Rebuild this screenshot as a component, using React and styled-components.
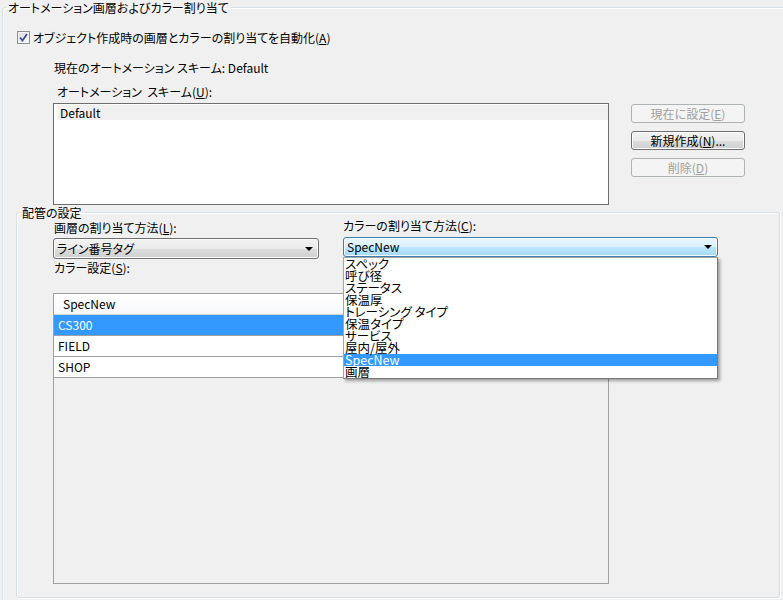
import React from 'react';
import styled, { createGlobalStyle, css } from 'styled-components';

const GlobalStyle = createGlobalStyle`
    html, body {
        margin: 0;
        padding: 0;
        background: #f0f0f0;
        overflow: hidden;
    }
    body {
        font-family: "Noto Sans CJK JP", "Noto Sans", sans-serif;
        font-size: 12px;
        color: #000;
        font-feature-settings: "palt";
    }
`;

const Page = styled.div`
    width: 783px;
    height: 600px;
    overflow: hidden;
`;

// Windows 7 style group box
const GroupBox = styled.fieldset`
    margin: 0;
    padding: 0;
    border: 1px solid #d5dfe5;
    border-radius: 3px;
    box-shadow: inset 1px 1px 0 #fff, 1px 1px 0 #fff;
    min-width: 0;
`;

const OuterGroup = styled(GroupBox)`
    margin-left: 2px;
    width: 800px;
    height: 640px;
`;

const InnerGroup = styled(GroupBox)`
    margin-left: 13px;
    width: 762px;
    height: 391px;
`;

const Legend = styled.legend`
    margin-left: 3px;
    padding: 1px 2px 0;
    line-height: 13px;
    height: 14px;
    box-sizing: border-box;
`;

const Label = styled.div`
    line-height: 14px;
    white-space: nowrap;
    margin-top: ${p => p.$top || 0}px;
    margin-left: ${p => p.$left || 0}px;
`;

const CheckRow = styled.label`
    display: flex;
    align-items: center;
    gap: 3px;
    margin: 17px 0 0 14px;
    line-height: 13px;
    height: 13px;
`;

const Box = styled.span`
    width: 11px;
    height: 11px;
    border: 1px solid #8e8f8f;
    background: linear-gradient(135deg, #dcdcdc, #fbfbfb);
    display: flex;
    align-items: center;
    justify-content: center;
    box-shadow: inset 0 0 0 1px #f4f4f4;
`;

const SchemeRow = styled.div`
    display: flex;
    gap: 22px;
    margin: 4px 0 0 50px;
`;

const ListBox = styled.div`
    width: 554px;
    height: 99px;
    border: 1px solid #6e6e6e;
    background: #fff;
    padding: 1px 0 0 0;
    box-sizing: content-box;
`;

const ListItem = styled.div`
    margin-left: 4px;
    height: 15px;
    line-height: 15px;
    padding-left: 2px;
    background: #f0f0f0;
`;

const ButtonColumn = styled.div`
    display: flex;
    flex-direction: column;
    gap: 8px;
    margin-top: 1px;
`;

const Button = styled.button`
    width: 114px;
    height: 19px;
    padding: 0;
    font: inherit;
    font-feature-settings: "palt";
    line-height: 17px;
    border-radius: 3px;
    border: 1px solid #707070;
    color: #000;
    background: linear-gradient(#f2f2f2 0%, #ebebeb 50%, #dddddd 51%, #cfcfcf 100%);
    box-shadow: inset 0 0 0 1px #fcfcfc;
    ${p => p.disabled && css`
        border-color: #adb2b5;
        background: #f4f4f4;
        color: #a0a0a0;
        box-shadow: none;
    `}
`;

const Columns = styled.div`
    display: flex;
    margin-left: 36px;
`;

const LeftColumn = styled.div`
    width: 290px;
`;

const RightColumn = styled.div`
    width: 375px;
`;

const Combo = styled.div`
    position: relative;
    box-sizing: border-box;
    width: ${p => p.$width}px;
    height: ${p => p.$height}px;
    margin-top: ${p => p.$top}px;
    border: 1px solid #707070;
    border-radius: 3px;
    padding-left: 3px;
    line-height: ${p => p.$height - 2}px;
    background: linear-gradient(#f2f2f2 0%, #ebebeb 50%, #dddddd 51%, #cfcfcf 100%);
    box-shadow: inset 0 0 0 1px #fafafa;
    ${p => p.$focused && css`
        border-color: #3c7fb1;
        background: linear-gradient(#eaf6fd 0%, #d9f0fc 50%, #bee6fd 51%, #a7d9f5 100%);
        box-shadow: inset 0 0 0 1px #f4fbfe;
    `}

    &::after {
        content: '';
        position: absolute;
        right: 5px;
        top: 50%;
        margin-top: -2px;
        border-left: 4px solid transparent;
        border-right: 4px solid transparent;
        border-top: 4px solid #000;
    }
`;

const ComboWrap = styled.div`
    position: relative;
`;

const Popup = styled.div`
    position: absolute;
    top: 20px;
    left: 0;
    width: 375px;
    box-sizing: border-box;
    border: 1px solid #a6a6a6;
    border-right-color: #7a7a7a;
    border-bottom-color: #7a7a7a;
    background: #fff;
    box-shadow: 2px 2px 3px rgba(0, 0, 0, 0.35);
    z-index: 5;
`;

const PopupItem = styled.div`
    height: 12px;
    line-height: 12px;
    font-size: 12.5px;
    padding-left: 1px;
    white-space: nowrap;
    ${p => p.$selected && css`
        background: #3399ff;
        color: #fff;
    `}
`;

const Grid = styled.div`
    width: 554px;
    height: 289px;
    margin: 18px 0 0 36px;
    border: 1px solid #a0a0a0;
    box-sizing: content-box;
`;

const GridRow = styled.div`
    height: 20px;
    line-height: 20px;
    border-bottom: 1px solid #a0a0a0;
    padding-left: ${p => (p.$header ? 9 : 4)}px;
    background: #fff;
    ${p => p.$header && css`
        background: linear-gradient(#ffffff, #f7f8fa);
        border-bottom-color: #d5d5d5;
    `}
    ${p => p.$selected && css`
        background: #3399ff;
        color: #fff;
    `}
`;

const CheckMark = () => (
    <svg width="9" height="9" viewBox="0 0 9 9">
        <path d="M1 4.5 L3.5 7.5 L8 1" fill="none" stroke="#3b4f8c" strokeWidth="1.8" />
    </svg>
);

const colorMethods = [
    'スペック', '呼び径', 'ステータス', '保温厚', 'トレーシング タイプ',
    '保温タイプ', 'サービス', '屋内/屋外', 'SpecNew', '画層',
];

const colorRows = ['CS300', 'FIELD', 'SHOP'];

export default function App() {
    return (
        <Page>
            <GlobalStyle />
            <OuterGroup>
                <Legend>オートメーション画層およびカラー割り当て</Legend>
                <CheckRow>
                    <Box><CheckMark /></Box>
                    <span>オブジェクト作成時の画層とカラーの割り当てを自動化(<u>A</u>)</span>
                </CheckRow>
                <Label $top={17} $left={51}>現在のオートメーション スキーム: Default</Label>
                <Label $top={10} $left={54}>オートメーション&nbsp; スキーム(<u>U</u>):</Label>
                <SchemeRow>
                    <ListBox>
                        <ListItem>Default</ListItem>
                    </ListBox>
                    <ButtonColumn>
                        <Button disabled>現在に設定(<u>E</u>)</Button>
                        <Button>新規作成(<u>N</u>)...</Button>
                        <Button disabled>削除(<u>D</u>)</Button>
                    </ButtonColumn>
                </SchemeRow>
                <InnerGroup>
                    <Legend>配管の設定</Legend>
                    <Columns>
                        <LeftColumn>
                            <Label $top={2} $left={1}>画層の割り当て方法(<u>L</u>):</Label>
                            <Combo $width={266} $height={21} $top={3}>ライン番号タグ</Combo>
                            <Label $top={2} $left={1}>カラー設定(<u>S</u>):</Label>
                        </LeftColumn>
                        <RightColumn>
                            <Label $top={0}>カラーの割り当て方法(<u>C</u>):</Label>
                            <ComboWrap>
                                <Combo $width={375} $height={20} $top={4} $focused>SpecNew</Combo>
                                <Popup>
                                    {colorMethods.map(m => (
                                        <PopupItem key={m} $selected={m === 'SpecNew'}>{m}</PopupItem>
                                    ))}
                                </Popup>
                            </ComboWrap>
                        </RightColumn>
                    </Columns>
                    <Grid>
                        <GridRow $header>SpecNew</GridRow>
                        {colorRows.map(r => (
                            <GridRow key={r} $selected={r === 'CS300'}>{r}</GridRow>
                        ))}
                    </Grid>
                </InnerGroup>
            </OuterGroup>
        </Page>
    );
}
